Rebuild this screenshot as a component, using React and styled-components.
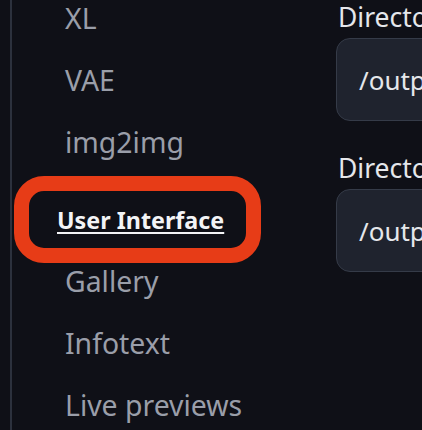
import React from 'react';
import styled, { createGlobalStyle } from 'styled-components';

const GlobalStyle = createGlobalStyle`
  html, body {
    margin: 0;
    padding: 0;
    background: #0f1017;
    overflow: hidden;
  }
  body {
    font-family: "Noto Sans", "Open Sans", sans-serif;
  }
`;

// Page with the settings sidebar on the left and the fields on the right
const Page = styled.div`
  display: flex;
  width: 422px;
  height: 430px;
  overflow: hidden;
  background: #0f1017;
`;

const Sidebar = styled.nav`
  flex: 0 0 324px;
  margin-left: 10px;
  border-left: 2px solid #2c313d;
  display: flex;
  flex-direction: column;
  align-items: flex-start;
  margin-top: -13px;
`;

const NavItem = styled.div`
  height: 62px;
  line-height: 62px;
  padding-left: 53px;
  font-size: 28.4px;
  color: #9a9ea9;
  white-space: nowrap;
`;

// Item highlighted with the red annotation frame
const SelectedItem = styled.div`
  margin: 3px 0 -13px 2px;
  width: 247px;
  box-sizing: border-box;
  border: 15px solid #e73c17;
  border-radius: 30px;
  height: 87px;
  padding: 2px 0 0 28px;
  line-height: 55px;
  font-size: 23.3px;
  font-weight: 700;
  color: #f3f4f6;
  white-space: nowrap;

  span {
    text-decoration: underline;
    text-decoration-thickness: 2px;
    text-underline-offset: 3px;
  }
`;

const Main = styled.main`
  flex: 0 0 480px;
  display: flex;
  flex-direction: column;
  gap: 32px;
  padding-top: 2px;
`;

const Field = styled.div`
  display: flex;
  flex-direction: column;
  gap: 6px;
`;

const Label = styled.label`
  padding-left: 2px;
  height: 30px;
  line-height: 30px;
  font-size: 26.5px;
  color: #e5e7eb;
  white-space: nowrap;
`;

const TextBox = styled.div`
  box-sizing: border-box;
  height: 83px;
  border: 1px solid #353b48;
  border-radius: 14px;
  background: #1f232e;
  padding: 4px 0 0 22px;
  line-height: 75px;
  font-size: 26px;
  color: #e5e7eb;
  white-space: nowrap;
`;

const navItems = ['XL', 'VAE', 'img2img'];
const navItemsAfter = ['Gallery', 'Infotext', 'Live previews'];

const fields = [
  { label: 'Directory for saving images using the Save button', value: '/outputs/save' },
  { label: 'Directory for saving init images when using img2img', value: '/outputs/init-images' },
];

const App = () => {
  return (
    <>
      <GlobalStyle />
      <Page>
        <Sidebar>
          {navItems.map((item) => (
            <NavItem key={item}>{item}</NavItem>
          ))}
          <SelectedItem>
            <span>User Interface</span>
          </SelectedItem>
          {navItemsAfter.map((item) => (
            <NavItem key={item}>{item}</NavItem>
          ))}
        </Sidebar>
        <Main>
          {fields.map((f) => (
            <Field key={f.label}>
              <Label>{f.label}</Label>
              <TextBox>{f.value}</TextBox>
            </Field>
          ))}
        </Main>
      </Page>
    </>
  );
};

export default App;
